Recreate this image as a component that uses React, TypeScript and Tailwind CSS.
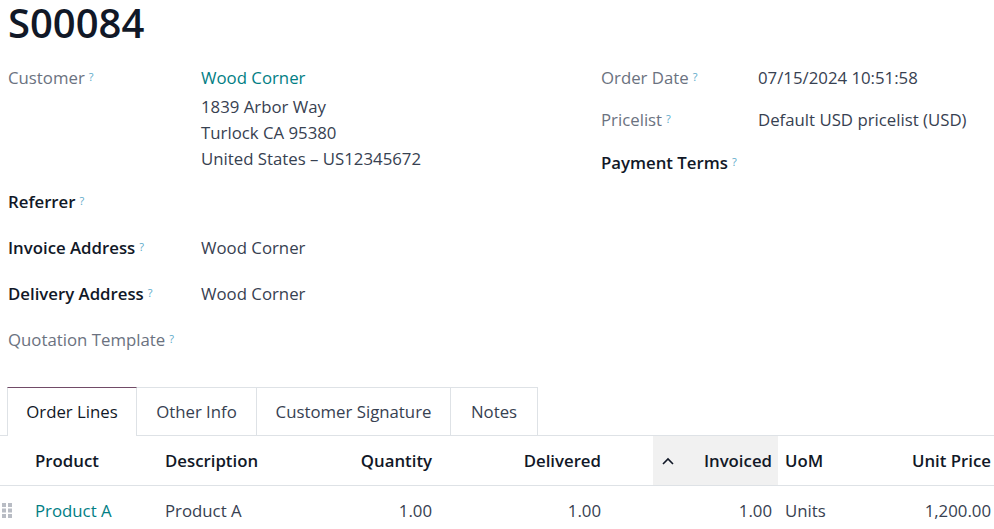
import React from 'react';

const Q = () => <sup className="ml-1 text-[11px] font-normal text-[#5ba9c9] relative -top-[3px]">?</sup>;

const Label: React.FC<{ text: string; strong?: boolean }> = ({ text, strong }) => (
  <span className={strong ? 'font-semibold text-[#111827]' : 'text-[#6b7280]'}>
    {text}
    <Q />
  </span>
);

const DragHandle = () => (
  <svg width="10" height="15" viewBox="0 0 10 15" className="fill-[#b8bcc4]">
    <rect x="0" y="0" width="4" height="4" />
    <rect x="6" y="0" width="4" height="4" />
    <rect x="0" y="5.5" width="4" height="4" />
    <rect x="6" y="5.5" width="4" height="4" />
    <rect x="0" y="11" width="4" height="4" />
    <rect x="6" y="11" width="4" height="4" />
  </svg>
);

export default function App() {
  const tabs = ['Order Lines', 'Other Info', 'Customer Signature', 'Notes'];
  const tabWidths = ['w-[130px]', 'w-[120px]', 'w-[194px]', 'w-[87px]'];
  const cols = 'grid grid-cols-[27px_130px_113px_170px_169px_44px_125px_80px_1fr]';

  return (
    <div className="w-[994px] h-[529px] overflow-hidden bg-white text-[16.8px] text-[#374151]" style={{ fontFamily: '"Open Sans", "Noto Sans", sans-serif' }}>
      <div className="px-2">
        <h1 className="text-[40px] leading-[50px] font-semibold text-[#111827] -mt-[2px]">S00084</h1>

        <div className="flex mt-[17px]">
          <div className="w-[593px] leading-[26px]">
            <div className="grid grid-cols-[193px_1fr]">
              <Label text="Customer" />
              <div>
                <div className="text-[#017e84]">Wood Corner</div>
                <div className="mt-[3px]">1839 Arbor Way</div>
                <div>Turlock CA 95380</div>
                <div>United States – US12345672</div>
              </div>
            </div>
            <div className="grid grid-cols-[193px_1fr] mt-[17px]">
              <Label text="Referrer" strong />
              <div />
            </div>
            <div className="grid grid-cols-[193px_1fr] mt-[20px]">
              <Label text="Invoice Address" strong />
              <div>Wood Corner</div>
            </div>
            <div className="grid grid-cols-[193px_1fr] mt-[20px]">
              <Label text="Delivery Address" strong />
              <div>Wood Corner</div>
            </div>
            <div className="grid grid-cols-[193px_1fr] mt-[20px]">
              <Label text="Quotation Template" />
              <div />
            </div>
          </div>

          <div className="flex-1 leading-[26px]">
            <div className="grid grid-cols-[157px_1fr]">
              <Label text="Order Date" />
              <div>07/15/2024 10:51:58</div>
            </div>
            <div className="grid grid-cols-[157px_1fr] mt-[16px]">
              <Label text="Pricelist" />
              <div>Default USD pricelist (USD)</div>
            </div>
            <div className="grid grid-cols-[157px_1fr] mt-[17px]">
              <Label text="Payment Terms" strong />
              <div />
            </div>
          </div>
        </div>
      </div>

      <div className="mt-[34px] flex border-b border-[#dee2e6] pl-[7px]">
        {tabs.map((t, i) => (
          <div
            key={t}
            className={`${tabWidths[i]} h-[49px] flex items-center justify-center -mb-px ${
              i === 0
                ? 'border-x border-t border-x-[#dee2e6] border-t-[#714b67] bg-white text-[#111827]'
                : 'border-x border-t border-[#dee2e6] border-l-0 text-[#374151]'
            }`}
          >
            {t}
          </div>
        ))}
      </div>

      <div className={`${cols} h-[50px] items-center border-b border-[#dee2e6] font-semibold text-[#111827]`}>
        <div />
        <div className="pl-2">Product</div>
        <div className="pl-2">Description</div>
        <div className="text-right pr-2">Quantity</div>
        <div className="text-right pr-2">Delivered</div>
        <div className="h-full" />
        <div className="h-full bg-[#f1f1f1] flex items-center justify-between pl-[9px] pr-[6px]">
          <svg width="12" height="8" viewBox="0 0 12 8" fill="none" stroke="#111827" strokeWidth="1.6">
            <path d="M1 7 L6 2 L11 7" />
          </svg>
          <span>Invoiced</span>
        </div>
        <div className="pl-[7px]">UoM</div>
        <div className="text-right pr-[3px]">Unit Price</div>
      </div>

      <div className={`${cols} h-[49px] items-center`}>
        <div className="pl-[2px] flex items-center"><DragHandle /></div>
        <div className="pl-2 text-[#017e84]">Product A</div>
        <div className="pl-2">Product A</div>
        <div className="text-right pr-2">1.00</div>
        <div className="text-right pr-2">1.00</div>
        <div />
        <div className="text-right pr-[6px]">1.00</div>
        <div className="pl-[7px]">Units</div>
        <div className="text-right pr-[3px]">1,200.00</div>
      </div>
    </div>
  );
}
